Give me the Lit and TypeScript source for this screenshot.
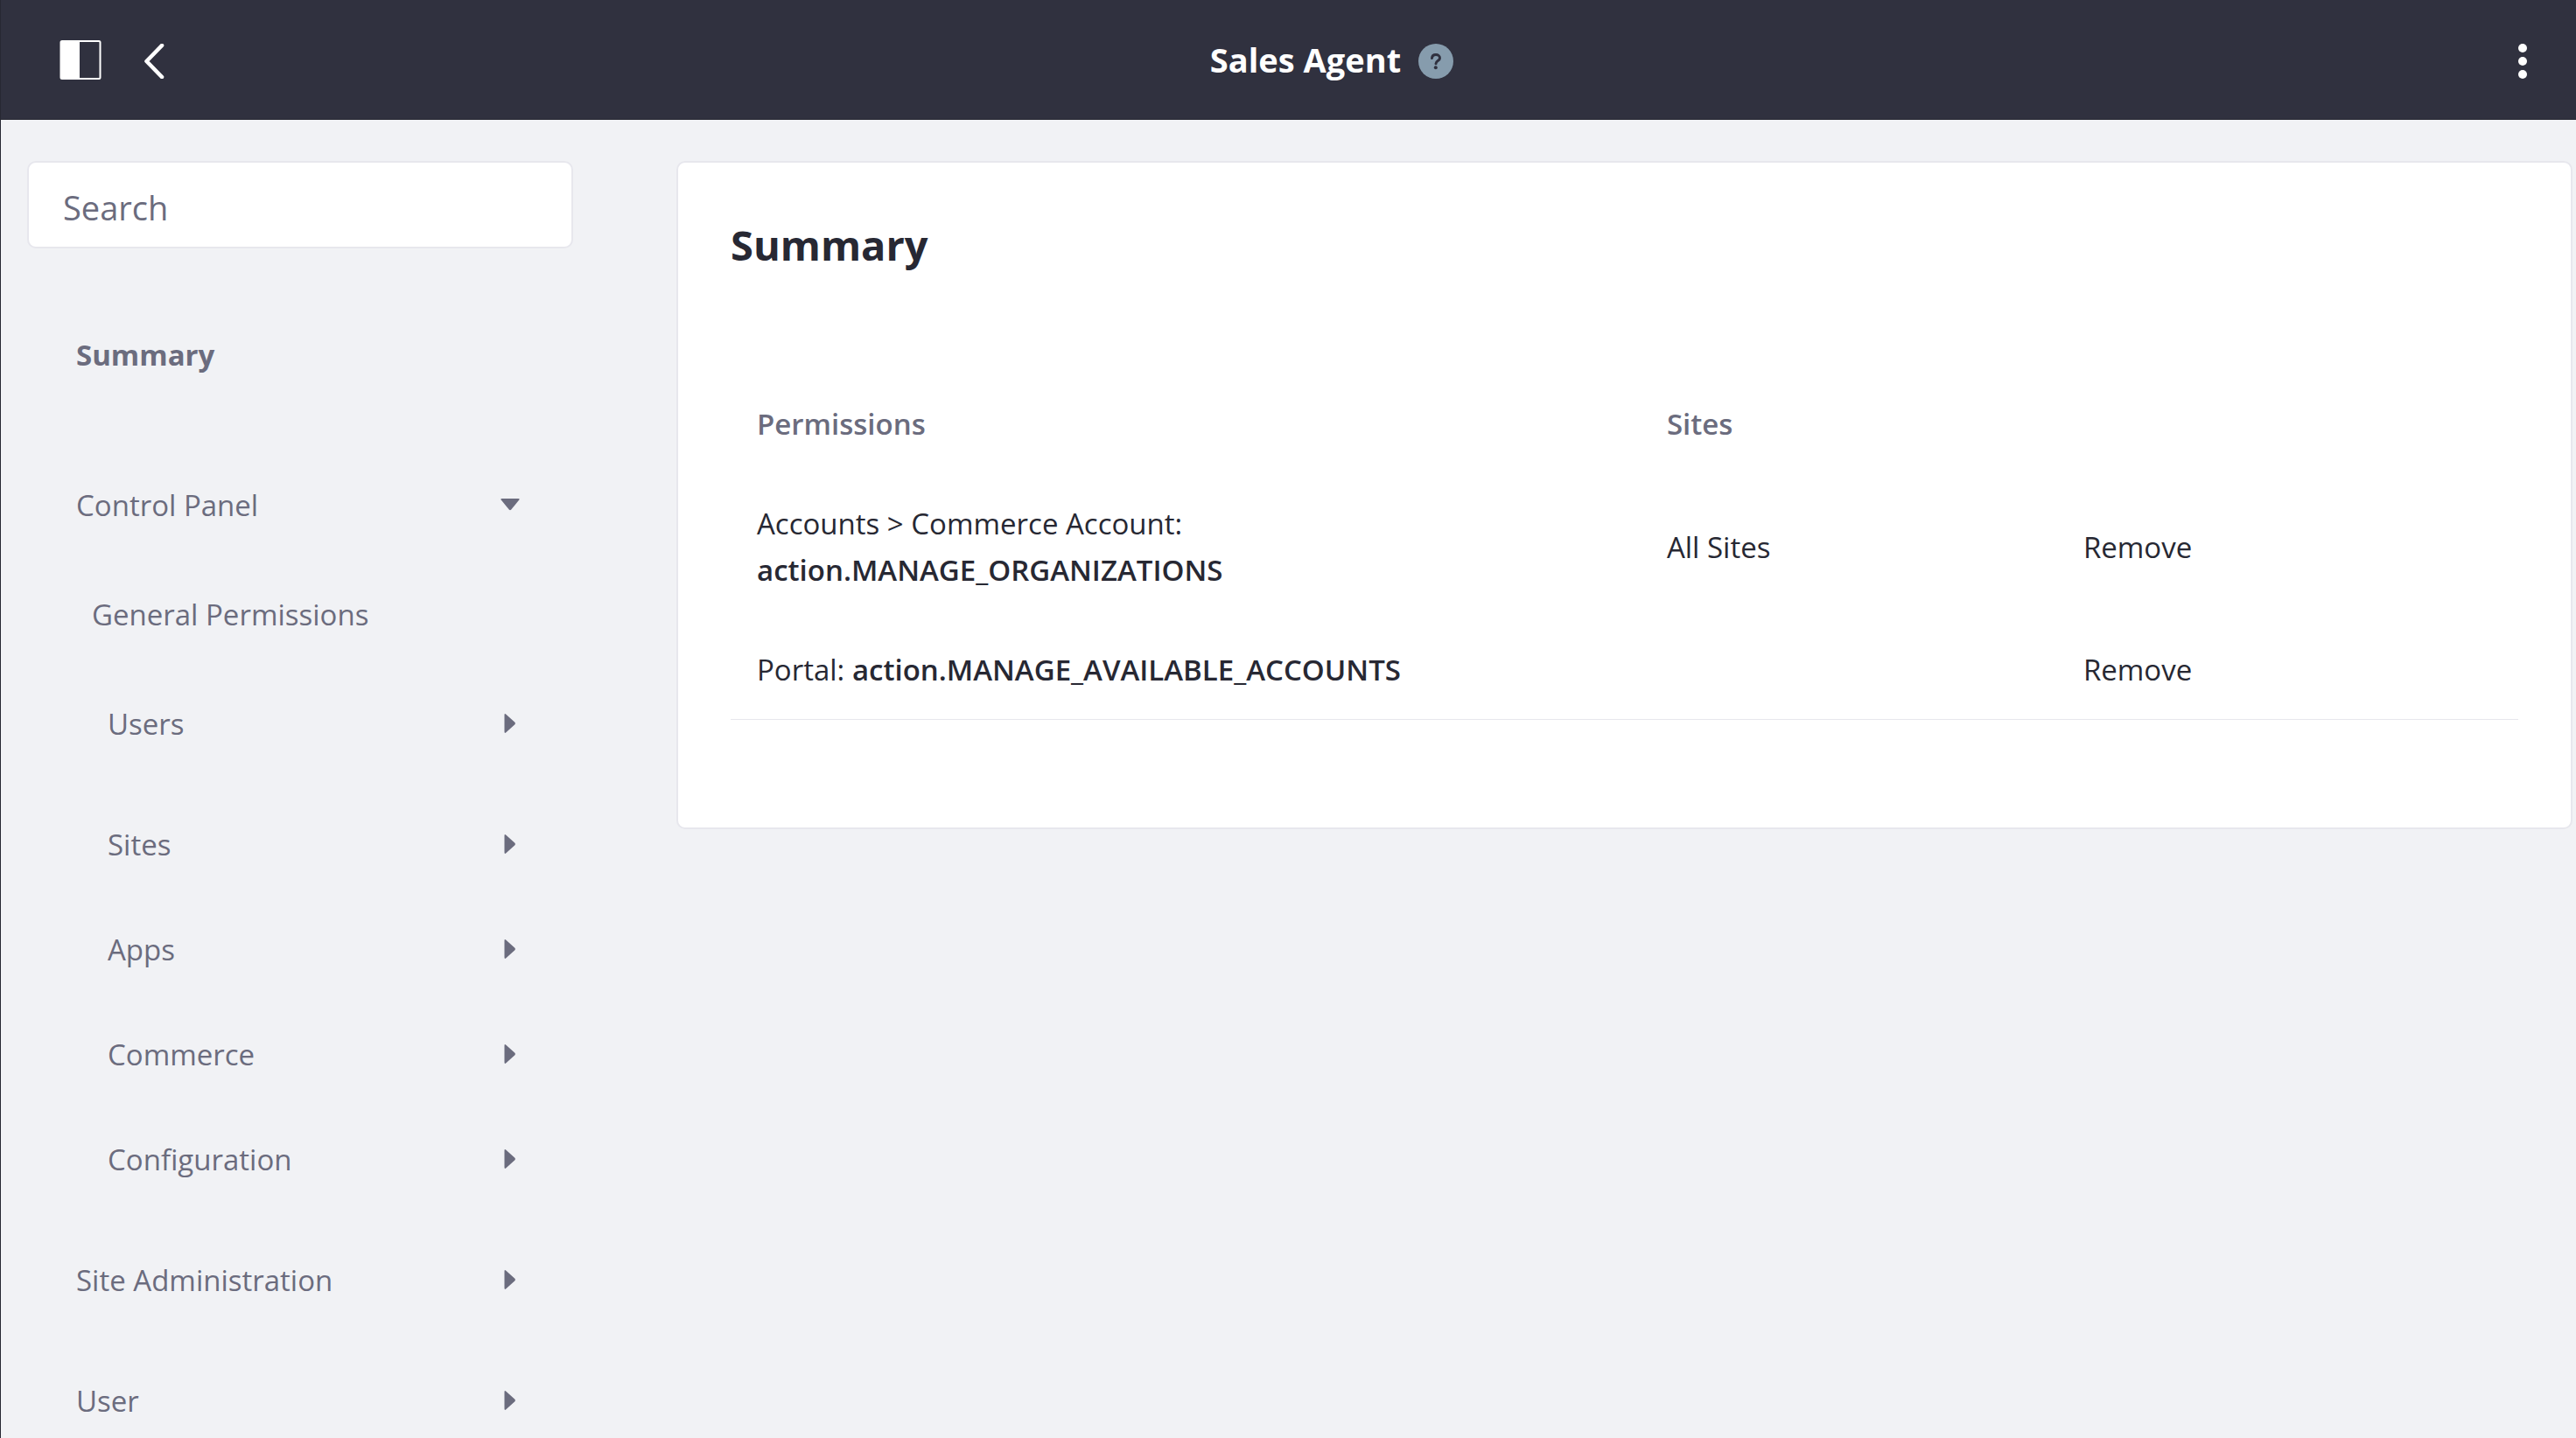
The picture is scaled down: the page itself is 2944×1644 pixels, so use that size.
import { LitElement, html, css, svg, nothing } from "lit";
import { customElement, property, state } from "lit/decorators.js";
import { classMap } from "lit/directives/class-map.js";

interface NavItem {
  label: string;
  level: 1 | 2 | 3;
  gap: "none" | "tight" | "row" | "section" | "wide";
  expandable: boolean;
  open?: boolean;
  active?: boolean;
}

interface Permission {
  resource: string;
  action: string;
  sites: string;
}

const NAV_ITEMS: NavItem[] = [
  { label: "Summary", level: 1, gap: "none", expandable: false, active: true },
  { label: "Control Panel", level: 1, gap: "wide", expandable: true, open: true },
  { label: "General Permissions", level: 2, gap: "tight", expandable: false },
  { label: "Users", level: 3, gap: "tight", expandable: true },
  { label: "Sites", level: 3, gap: "section", expandable: true },
  { label: "Apps", level: 3, gap: "row", expandable: true },
  { label: "Commerce", level: 3, gap: "row", expandable: true },
  { label: "Configuration", level: 3, gap: "row", expandable: true },
  { label: "Site Administration", level: 1, gap: "section", expandable: true },
  { label: "User", level: 1, gap: "section", expandable: true },
];

const PERMISSIONS: Permission[] = [
  { resource: "Accounts > Commerce Account:", action: "action.MANAGE_ORGANIZATIONS", sites: "All Sites" },
  { resource: "Portal:", action: "action.MANAGE_AVAILABLE_ACCOUNTS", sites: "" },
];

const caretDown = svg`<path d="M2.500 5h19q2 0 .8 1.500l-9 11q-1.300 1.300-2.600 0l-9-11Q.5 5 2.500 5z" />`;
const caretRight = svg`<path d="M5.500 2.500q0-2.500 1.900-.8l10 9q1.200 1.300 0 2.600l-10 9q-1.900 1.700-1.900-.8z" />`;

@customElement("app-header")
export class AppHeader extends LitElement {
  @property() heading = "";

  static styles = css`
    :host { display: block; }
    .bar {
      display: flex;
      align-items: center;
      height: 137px;
      box-sizing: border-box;
      padding: 4px 0 0 53px;
      background: #30313f;
      border-bottom: 1px solid #272833;
      color: #fff;
    }
    .button {
      display: flex;
      align-items: center;
      justify-content: center;
      height: 80px;
      padding: 0;
      border: 0;
      background: none;
      color: inherit;
      cursor: pointer;
    }
    .toggle { width: 76px; }
    .back { width: 92px; }
    .menu { width: 122px; }
    .title {
      flex: 1;
      display: flex;
      align-items: center;
      justify-content: center;
      gap: 20px;
    }
    .name {
      margin: 0;
      padding-bottom: 4px;
      font-size: 38px;
      line-height: 56px;
      font-weight: 700;
    }
    .help { width: 40px; color: #869cad; }
  `;

  render() {
    return html`
      <header class="bar">
        <button class="button toggle" aria-label="Toggle product menu">
          <svg width="48" height="48" viewBox="0 0 48 48" aria-hidden="true">
            <rect x="1.500" y="1" width="45" height="43" rx="1.500" fill="none" stroke="currentColor" stroke-width="2" />
            <rect x="1" y="1" width="22" height="43" fill="currentColor" />
          </svg>
        </button>
        <a class="button back" href="#back" aria-label="Back">
          <svg width="40" height="40" viewBox="0 0 40 40" aria-hidden="true">
            <path d="M29 2 11.500 20 29 38" fill="none" stroke="currentColor" stroke-width="4.600"
              stroke-linecap="round" stroke-linejoin="round" />
          </svg>
        </a>
        <div class="title">
          <h1 class="name">${this.heading}</h1>
          <button class="button help" aria-label="Help">
            <svg width="40" height="40" viewBox="0 0 40 40" aria-hidden="true">
              <circle cx="20" cy="20" r="20" fill="currentColor" />
              <path d="M15.500 16.500c.2-2.600 2-3.900 4.500-3.900s4.500 1.500 4.500 3.800c0 3.100-4.500 3.200-4.500 6.300" fill="none"
                stroke="#30313f" stroke-width="3" stroke-linecap="round" />
              <circle cx="19.800" cy="27.300" r="2" fill="#30313f" />
            </svg>
          </button>
        </div>
        <button class="button menu" aria-label="Options">
          <svg width="40" height="40" viewBox="0 0 40 40" fill="currentColor" aria-hidden="true">
            <circle cx="20" cy="5" r="5" />
            <circle cx="20" cy="20" r="5" />
            <circle cx="20" cy="35" r="5" />
          </svg>
        </button>
      </header>
    `;
  }
}

@customElement("role-sidebar")
export class RoleSidebar extends LitElement {
  @state() private query = "";

  static styles = css`
    :host { display: block; }
    .search {
      display: block;
      width: 100%;
      height: 100px;
      box-sizing: border-box;
      padding: 6px 39px 0;
      border: 2px solid #e7e7ed;
      border-radius: 10px;
      background: #fff;
      color: #272833;
      font: inherit;
      font-size: 38px;
    }
    .search::placeholder { color: #6b6c7e; opacity: 1; }
    .nav { padding: 81px 60px 0 56px; }
    .list { margin: 0; padding: 0; list-style: none; }
    .link {
      display: flex;
      align-items: center;
      justify-content: space-between;
      height: 80px;
      color: #6b6c7e;
      font-size: 33px;
      line-height: 52px;
      text-decoration: none;
    }
    .label { padding-top: 2px; }
    .caret { width: 24px; height: 24px; fill: currentColor; }
    .active { font-weight: 700; }
    .level-2 { padding-left: 18px; }
    .level-3 { padding-left: 36px; }
    .gap-tight { margin-top: 45px; }
    .gap-row { margin-top: 40px; }
    .gap-section { margin-top: 58px; }
    .gap-wide { margin-top: 92px; }
  `;

  private renderItem(item: NavItem) {
    const classes = {
      link: true,
      active: !!item.active,
      [`level-${item.level}`]: true,
      [`gap-${item.gap}`]: true,
    };
    return html`
      <li>
        <a class=${classMap(classes)} href="#${item.label.toLowerCase().replace(/ /g, "-")}"
          aria-current=${item.active ? "page" : nothing}
          aria-expanded=${item.expandable ? String(!!item.open) : nothing}>
          <span class="label">${item.label}</span>
          ${item.expandable
            ? html`<svg class="caret" viewBox="0 0 24 24" aria-hidden="true">${item.open ? caretDown : caretRight}</svg>`
            : nothing}
        </a>
      </li>
    `;
  }

  render() {
    return html`
      <input class="search" type="text" placeholder="Search" aria-label="Search" .value=${this.query}
        @input=${(e: InputEvent) => { this.query = (e.target as HTMLInputElement).value; }} />
      <nav class="nav" aria-label="Permissions">
        <ul class="list">${NAV_ITEMS.map((item) => this.renderItem(item))}</ul>
      </nav>
    `;
  }
}

@customElement("permission-summary")
export class PermissionSummary extends LitElement {
  static styles = css`
    :host { display: block; }
    .card {
      padding: 60px 60px 123px;
      border: 2px solid #e7e7ed;
      border-radius: 10px;
      background: #fff;
      color: #272833;
    }
    .heading {
      margin: 0 0 113px;
      font-size: 47px;
      line-height: 68px;
      font-weight: 700;
    }
    .table {
      width: 100%;
      table-layout: fixed;
      border-collapse: collapse;
      border-bottom: 1px solid #e7e7ed;
      font-size: 33px;
      line-height: 53px;
      text-align: left;
    }
    .resource { width: 50.9%; }
    .sites { width: 23.3%; }
    .head { height: 114px; padding: 0 30px; color: #6b6c7e; font-weight: 600; }
    .cell { padding: 31px 30px 30px; vertical-align: middle; }
    .action { font-weight: 600; }
    .remove { color: inherit; text-decoration: none; }
  `;

  render() {
    return html`
      <section class="card">
        <h2 class="heading">Summary</h2>
        <table class="table">
          <colgroup><col class="resource" /><col class="sites" /><col /></colgroup>
          <thead>
            <tr>
              <th class="head" scope="col">Permissions</th>
              <th class="head" scope="col">Sites</th>
              <td class="head"></td>
            </tr>
          </thead>
          <tbody>
            ${PERMISSIONS.map((p) => html`
              <tr>
                <td class="cell">${p.resource} <strong class="action">${p.action}</strong></td>
                <td class="cell">${p.sites}</td>
                <td class="cell"><a class="remove" href="#remove">Remove</a></td>
              </tr>
            `)}
          </tbody>
        </table>
      </section>
    `;
  }
}

@customElement("app-root")
export class AppRoot extends LitElement {
  static styles = css`
    :host {
      display: block;
      min-height: 100vh;
      box-sizing: border-box;
      border-left: 1px solid #272833;
      background: #f1f2f5;
      font-family: "Segoe UI", "Open Sans", "Noto Sans", sans-serif;
    }
    .body {
      display: flex;
      align-items: flex-start;
      gap: 118px;
      padding: 47px 4px 0 30px;
    }
    .side { flex: 0 0 624px; }
    .main { flex: 1; min-width: 0; }
  `;

  render() {
    return html`
      <app-header heading="Sales Agent"></app-header>
      <div class="body">
        <role-sidebar class="side"></role-sidebar>
        <permission-summary class="main"></permission-summary>
      </div>
    `;
  }
}
